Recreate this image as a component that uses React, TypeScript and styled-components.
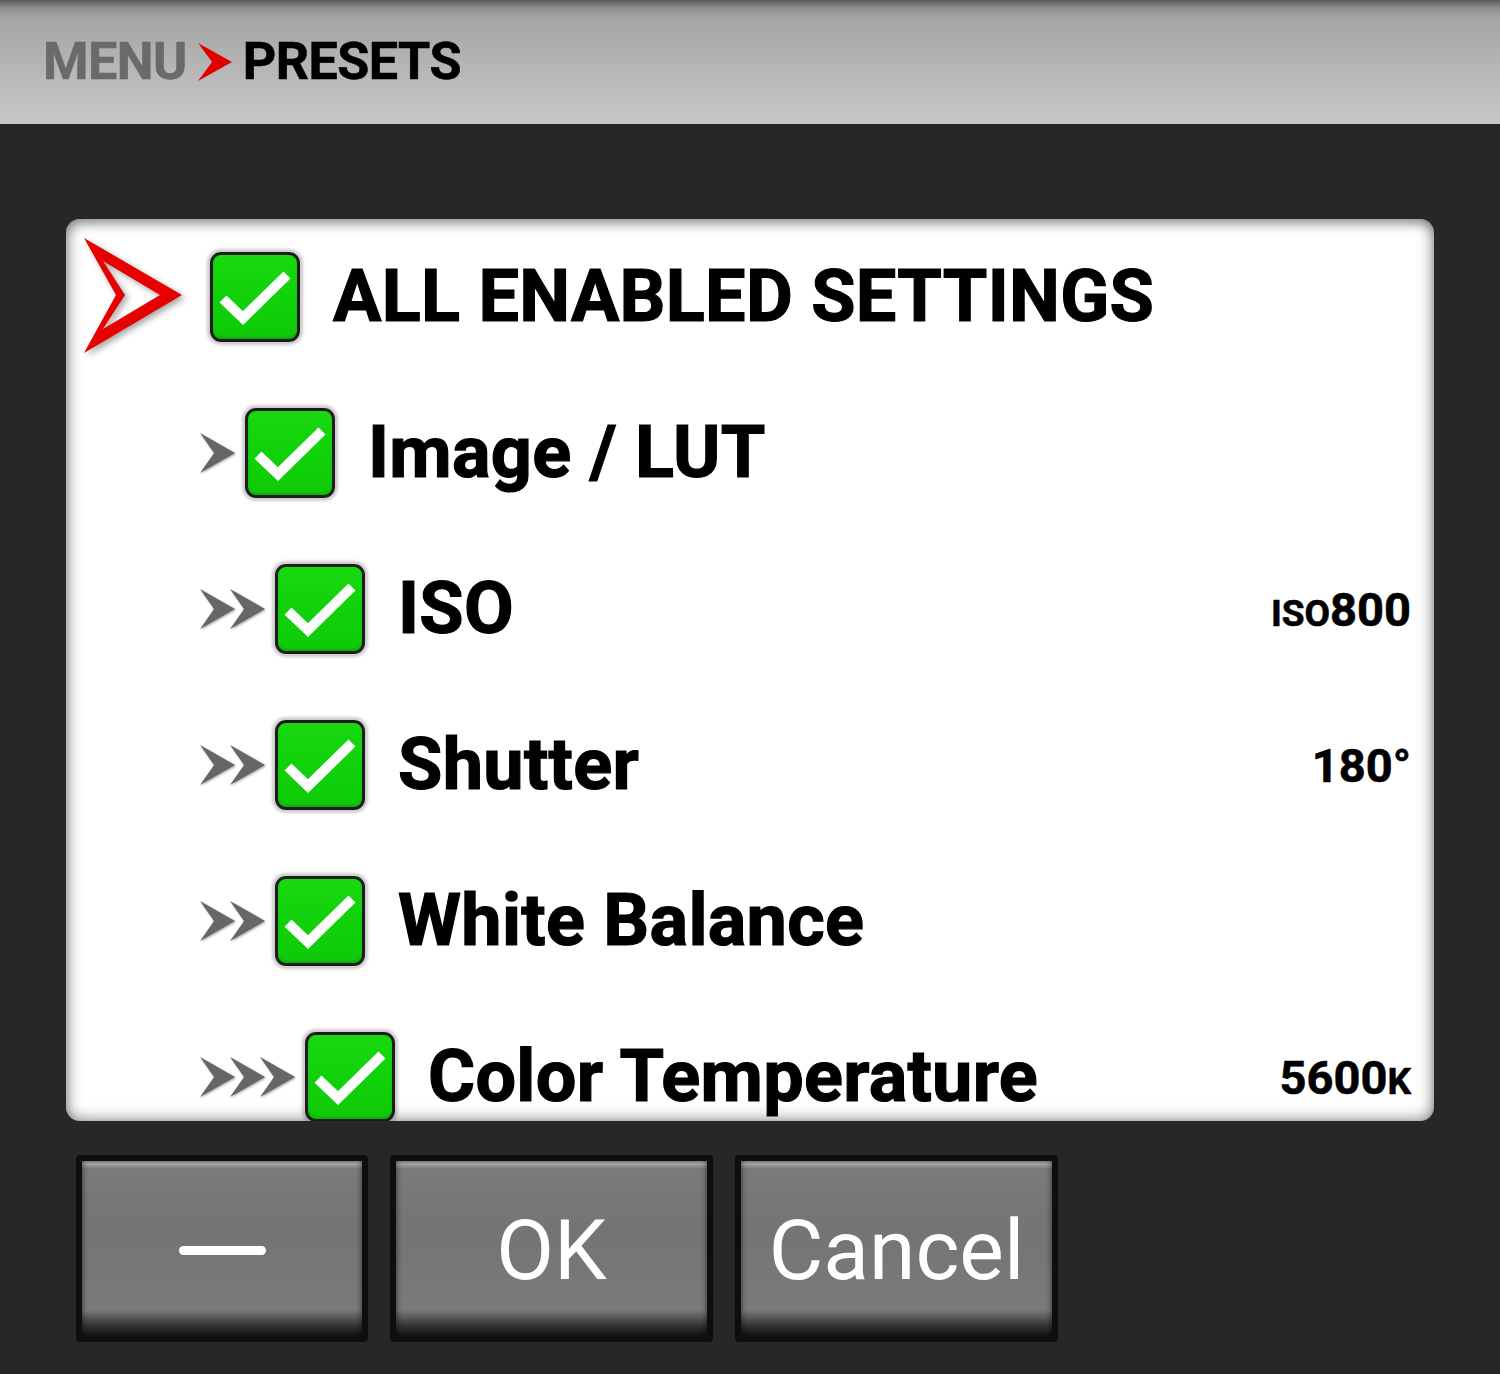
import styled, { createGlobalStyle } from 'styled-components';

const GlobalStyle = createGlobalStyle`
  html, body {
    margin: 0;
    padding: 0;
    background: #272727;
  }
  body {
    width: 1500px;
    height: 1374px;
    overflow: hidden;
    font-family: Roboto, "Liberation Sans", sans-serif;
  }
`;

const Screen = styled.div`
  width: 1500px;
  height: 1374px;
  background: #272727;
  display: flex;
  flex-direction: column;
`;

const Header = styled.header`
  height: 124px;
  flex: none;
  display: flex;
  align-items: center;
  padding-left: 43px;
  gap: 11px;
  background: linear-gradient(to bottom, #5c5c5c 0px, #8e8e8e 8px, #a6a6a6 18px, #b3b3b3 60px, #c8c8c8 123px);
  box-sizing: border-box;
`;

const Crumb = styled.span<{ $current?: boolean }>`
  font-size: 52px;
  font-weight: 700;
  -webkit-text-stroke: 0.6px currentColor;
  letter-spacing: -0.5px;
  color: ${(p) => (p.$current ? '#000' : '#6a6a6a')};
  line-height: 1;
`;

const Panel = styled.section`
  margin: 95px 66px 0;
  height: 902px;
  flex: none;
  background: #fff;
  border-radius: 14px;
  overflow: hidden;
  box-shadow: inset 0 0 16px rgba(0, 0, 0, 0.55), inset 0 6px 8px rgba(0, 0, 0, 0.15);
`;

const Row = styled.div`
  height: 156px;
  display: grid;
  grid-template-columns: 134px auto auto 1fr auto;
  align-items: center;
  padding-right: 23px;
`;

const PointerCell = styled.div`
  display: flex;
  align-items: center;
  padding-left: 16px;
`;

const Indent = styled.div<{ $level: number }>`
  display: flex;
  align-items: center;
  margin-right: 10px;
  filter: drop-shadow(1px 1px 1px rgba(0, 0, 0, 0.35));
`;

const Box = styled.div`
  width: 90px;
  height: 90px;
  box-sizing: border-box;
  border: 3px solid #1c1c1c;
  border-radius: 11px;
  background: linear-gradient(to bottom, #19d810 0%, #11d20a 50%, #0fc909 100%);
  box-shadow: 0 0 3px 3px rgba(0, 0, 0, 0.2), inset 0 -2px 2px rgba(0, 0, 0, 0.15);
  display: flex;
  align-items: center;
  justify-content: center;
`;

const Label = styled.span`
  margin-left: 33px;
  font-size: 72px;
  font-weight: 700;
  -webkit-text-stroke: 1.2px #000;
  letter-spacing: 0.3px;
  color: #000;
  white-space: nowrap;
  line-height: 1;
`;

const Value = styled.span`
  font-size: 47px;
  font-weight: 700;
  -webkit-text-stroke: 0.6px #000;
  color: #000;
  line-height: 1;
`;

const Small = styled.span`
  font-size: 37px;
`;

const ButtonBar = styled.div`
  display: flex;
  gap: 22px;
  padding-left: 76px;
  margin-top: 34px;
`;

const Key = styled.button<{ $w: number }>`
  width: ${(p) => p.$w}px;
  height: 187px;
  box-sizing: border-box;
  border: 6px solid #0e0e0e;
  border-radius: 4px;
  background: linear-gradient(
    to bottom,
    #7e7e7e 0px,
    #a2a2a2 3px,
    #7a7a7a 8px,
    #747474 40%,
    #7a7a7a calc(100% - 26px),
    #3a3a3a calc(100% - 12px),
    #111 100%
  );
  box-shadow: inset 5px 0 4px -3px rgba(0, 0, 0, 0.35), inset -5px 0 4px -3px rgba(0, 0, 0, 0.35);
  color: #fff;
  font-family: Roboto, "Liberation Sans", sans-serif;
  font-size: 84px;
  font-weight: 400;
  display: flex;
  align-items: center;
  justify-content: center;
  padding: 4px 0 0;
`;

const Dash = styled.span`
  width: 87px;
  height: 9px;
  border-radius: 5px;
  background: #fff;
`;

function Pointer() {
  return (
    <svg width="104" height="122" viewBox="0 0 104 122" style={{ overflow: 'visible', filter: 'drop-shadow(3px 3px 3px rgba(0,0,0,0.35))' }}>
      <path d="M2 2 L100 59 L2 117 L34 59 Z M21 25 L43 59 L21 93 L78 59 Z" fill="#e60000" fillRule="evenodd" />
    </svg>
  );
}

function Chevrons({ count }: { count: number }) {
  const w = count * 30 + 5;
  return (
    <svg width={w} height="40" viewBox={`0 0 ${w} 40`}>
      {Array.from({ length: count }).map((_, i) => (
        <path key={i} d={`M${i * 30} 0 L${i * 30 + 35} 20 L${i * 30} 40 L${i * 30 + 14} 20 Z`} fill="#666" />
      ))}
    </svg>
  );
}

function Check() {
  return (
    <Box>
      <svg width="84" height="84" viewBox="0 0 84 84">
        <path d="M10 44 L30 63 L74 20" fill="none" stroke="#fff" strokeWidth="10" strokeLinejoin="miter" />
      </svg>
    </Box>
  );
}

type Item = { label: string; level: number; value?: React.ReactNode };

const items: Item[] = [
  { label: 'ALL ENABLED SETTINGS', level: 0 },
  { label: 'Image / LUT', level: 1 },
  { label: 'ISO', level: 2, value: (<><Small>ISO</Small>800</>) },
  { label: 'Shutter', level: 2, value: '180°' },
  { label: 'White Balance', level: 2 },
  { label: 'Color Temperature', level: 3, value: (<>5600<Small>K</Small></>) },
];

export default function App() {
  return (
    <Screen>
      <GlobalStyle />
      <Header>
        <Crumb>MENU</Crumb>
        <svg width="34" height="38" viewBox="0 0 34 38">
          <path d="M0 0 L34 19 L0 38 L14 19 Z" fill="#e00000" />
        </svg>
        <Crumb $current>PRESETS</Crumb>
      </Header>

      <Panel>
        {items.map((it) => (
          <Row key={it.label}>
            <PointerCell>{it.level === 0 && <Pointer />}</PointerCell>
            <Indent $level={it.level}>{it.level > 0 && <Chevrons count={it.level} />}</Indent>
            <Check />
            <Label>{it.label}</Label>
            <Value>{it.value}</Value>
          </Row>
        ))}
      </Panel>

      <ButtonBar>
        <Key $w={292}><Dash /></Key>
        <Key $w={323}>OK</Key>
        <Key $w={323}>Cancel</Key>
      </ButtonBar>
    </Screen>
  );
}
